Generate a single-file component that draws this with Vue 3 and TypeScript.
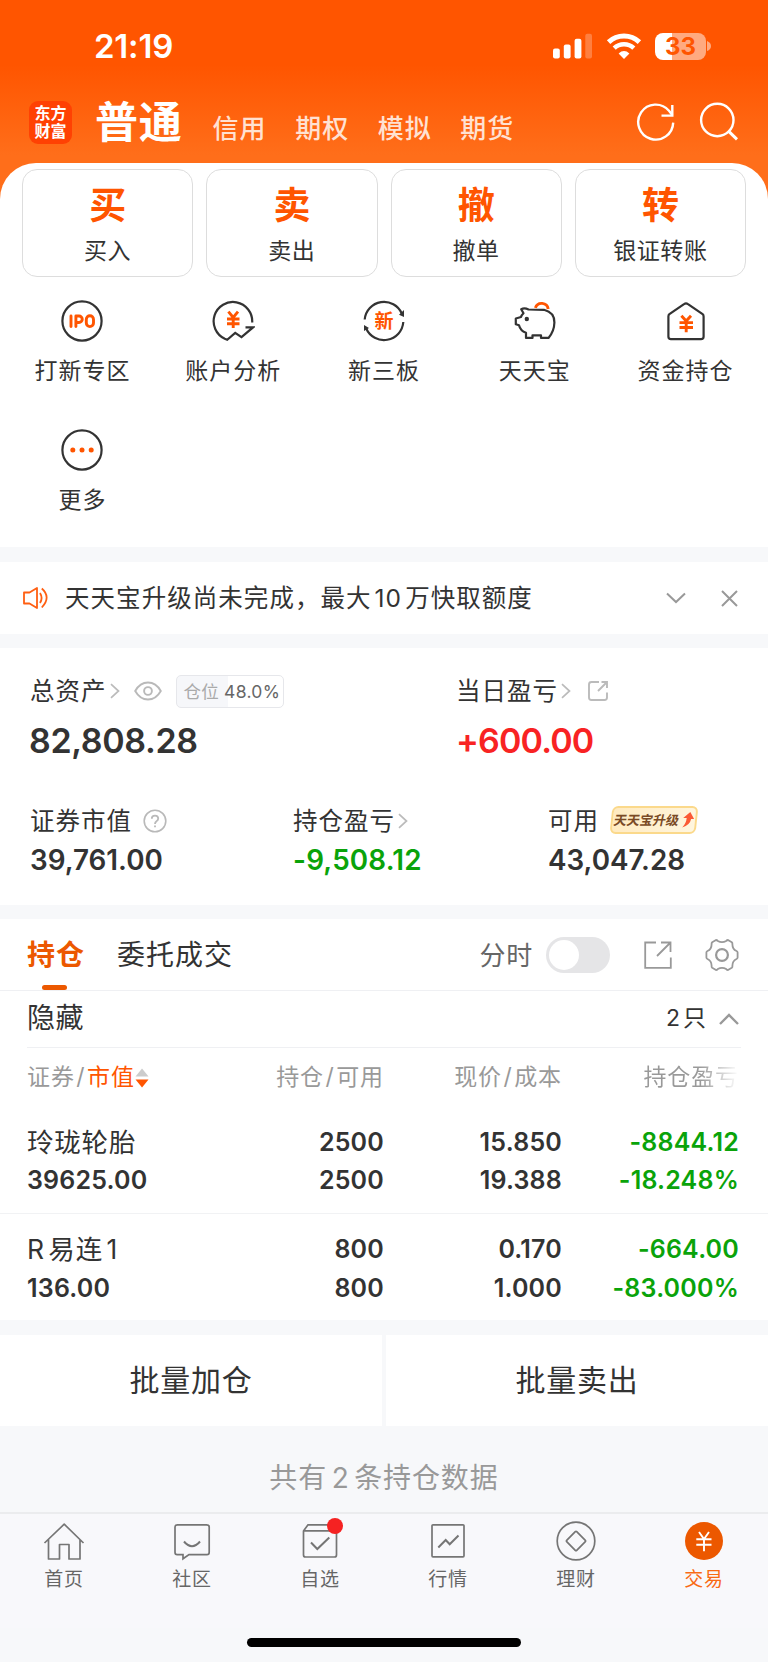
<script setup lang="ts">
interface Card { glyph: string; label: string }
interface Shortcut { icon: string; label: string }
interface Holding {
  name: string[]
  value: string
  held: string
  usable: string
  price: string
  cost: string
  profit: string
  rate: string
}

const markets: string[] = ['信用', '期权', '模拟', '期货']

const cards: Card[] = [
  { glyph: '买', label: '买入' },
  { glyph: '卖', label: '卖出' },
  { glyph: '撤', label: '撤单' },
  { glyph: '转', label: '银证转账' },
]

const shortcuts: Shortcut[] = [
  { icon: 'ipo', label: '打新专区' },
  { icon: 'account', label: '账户分析' },
  { icon: 'neeq', label: '新三板' },
  { icon: 'piggy', label: '天天宝' },
  { icon: 'house', label: '资金持仓' },
  { icon: 'more', label: '更多' },
]

// Names are split where Latin and Chinese runs meet, so the runs can be spaced apart.
const holdings: Holding[] = [
  { name: ['玲珑轮胎'], value: '39625.00', held: '2500', usable: '2500', price: '15.850', cost: '19.388', profit: '-8844.12', rate: '-18.248%' },
  { name: ['R', '易连', '1'], value: '136.00', held: '800', usable: '800', price: '0.170', cost: '1.000', profit: '-664.00', rate: '-83.000%' },
]

const tabs: Shortcut[] = [
  { icon: 'home', label: '首页' },
  { icon: 'community', label: '社区' },
  { icon: 'watch', label: '自选' },
  { icon: 'quotes', label: '行情' },
  { icon: 'wealth', label: '理财' },
  { icon: 'trade', label: '交易' },
]
</script>

<template>
  <div class="screen">
    <header class="header">
      <div class="status">
        <span class="time">21:19</span>
        <div class="status-icons">
          <svg class="signal" width="39" height="26" viewBox="0 0 39 26">
            <rect x="0" y="15.5" width="6.8" height="10" rx="2" fill="#fff" />
            <rect x="10.8" y="11.5" width="6.8" height="14" rx="2" fill="#fff" />
            <rect x="21.6" y="5.8" width="6.8" height="19.7" rx="2" fill="#fff" />
            <rect x="32.3" y="0.8" width="6.7" height="24.7" rx="2" fill="#fff" fill-opacity=".25" />
          </svg>
          <svg class="wifi" width="36" height="27" viewBox="0 0 36 27">
            <path d="M2.6 9.1 A22.5 22.5 0 0 1 33.4 9.1" fill="none" stroke="#fff" stroke-width="5" />
            <path d="M8.2 15.2 A14.2 14.2 0 0 1 27.8 15.2" fill="none" stroke="#fff" stroke-width="4.5" />
            <path d="M18 26 L12.6 20.4 Q18 15.8 23.4 20.4 Z" fill="#fff" />
          </svg>
          <div class="battery"><span>33</span></div>
          <svg class="battery-tip" width="4" height="10" viewBox="0 0 4 10"><path d="M0 0 Q4 1.5 4 5 T0 10Z" fill="#fff" fill-opacity=".5" /></svg>
        </div>
      </div>
      <nav class="nav">
        <div class="logo"><span>东方</span><span>财富</span></div>
        <span class="nav-active">普通</span>
        <span v-for="m in markets" :key="m" class="nav-item">{{ m }}</span>
        <div class="nav-tools">
          <svg width="40" height="40" viewBox="0 0 40 40" fill="none" stroke="#fff" stroke-width="2.4">
            <path d="M37.2 20.6 A17.5 17.5 0 1 1 33 8.7 L36.3 13" />
            <path d="M25.5 13.6 H36.3 V3" />
          </svg>
          <svg width="40" height="40" viewBox="0 0 40 40" fill="none" stroke="#fff" stroke-width="2.4">
            <circle cx="18.3" cy="18" r="16.2" />
            <path d="M29.5 29.2 L38 37.4" stroke-width="3" />
          </svg>
        </div>
      </nav>
    </header>

    <section class="sheet">
      <div class="cards">
        <div v-for="c in cards" :key="c.glyph" class="card">
          <span class="card-glyph">{{ c.glyph }}</span>
          <span class="card-label">{{ c.label }}</span>
        </div>
      </div>
      <div class="shortcuts">
        <div v-for="s in shortcuts" :key="s.label" class="shortcut">
          <svg width="44" height="44" viewBox="0 0 44 44" fill="none" stroke="#333" stroke-width="2.2">
            <template v-if="s.icon === 'ipo'">
              <circle cx="22" cy="22" r="19.6" />
              <g stroke="#ff5500" stroke-width="2.9" stroke-linejoin="round" stroke-linecap="round">
                <path d="M11 17 V27.5 M15.9 27.5 V17 H19 A3.2 3.2 0 0 1 19 23.5 H16" />
                <rect x="26.3" y="16.8" width="7.2" height="10.8" rx="3.6" />
              </g>
            </template>
            <template v-else-if="s.icon === 'account'">
              <path d="M41.2 23.5 A19.3 19.3 0 1 0 13.8 39.8 L16.2 40.8 L24.2 33.8 L30.5 38.2 L42 28.4 H34.5" />
              <path d="M17.4 12.7 L22.2 18.5 L27 12.7 M16 20 H28.5 M16 24.8 H28.5 M22.2 18.5 V29" stroke="#ff5500" stroke-width="2.9" />
            </template>
            <template v-else-if="s.icon === 'neeq'">
              <path d="M2.7 20.5 A19.4 19.4 0 0 1 39.8 14.5" />
              <path d="M41.3 23 A19.4 19.4 0 0 1 4.2 29.5" />
              <path d="M42 11 V18 L37 15.8Z M2 26 L7 29 L2 32Z" fill="#333" stroke="none" />
              <text x="22" y="29.2" text-anchor="middle" class="svg-new">新</text>
            </template>
            <template v-else-if="s.icon === 'piggy'">
              <path d="M8.2 10.2 Q11.5 8.5 15.5 10.5 L31 10.8 C37.8 12.5 41.5 17 41.4 23.5 C41.2 31 38.5 35.5 35.5 38.9 H28 V36.3 H19.5 V38.9 H13 V33.8 Q7.4 31.8 6 26.3 L2.8 25.3 V19.5 L8 18 Q8.3 16.2 10.5 14.2Z" stroke-linejoin="round" />
              <circle cx="13.8" cy="20" r="2.2" fill="#333" stroke="none" />
              <path d="M22.4 8.9 A6.6 6.6 0 0 1 35.2 10" stroke="#ff5500" stroke-width="2.9" />
            </template>
            <template v-else-if="s.icon === 'house'">
              <path d="M22 4.3 Q22.8 4.3 24 5.2 L38.6 15.2 Q39.6 16 39.6 17.5 V37.5 Q39.6 40.2 37 40.2 H7 Q4.4 40.2 4.4 37.5 V17.5 Q4.4 16 5.4 15.2 L20 5.2 Q21.2 4.3 22 4.3Z" />
              <path d="M17.4 16.7 L22.2 22 L27 16.7 M15.5 23.6 H29 M15.5 28.5 H29 M22.2 22 V33.2" stroke="#ff5500" stroke-width="2.9" />
            </template>
            <template v-else>
              <circle cx="22" cy="22" r="19.6" />
              <g fill="#ff5500" stroke="none"><circle cx="12.8" cy="22" r="2.5" /><circle cx="22" cy="22" r="2.5" /><circle cx="31.2" cy="22" r="2.5" /></g>
            </template>
          </svg>
          <span>{{ s.label }}</span>
        </div>
      </div>
    </section>

    <section class="notice">
      <svg width="26" height="24" viewBox="0 0 26 24" fill="none" stroke="#ff5f12" stroke-width="1.8">
        <path d="M1 6.5 H6.5 L14 2 V22 L6.5 17.5 H1Z" stroke-linejoin="round" />
        <path d="M17 7 Q20.2 12 17 17 M18.8 2.5 Q28.5 11 18.8 21.5" />
      </svg>
      <span class="notice-text">天天宝升级尚未完成，最大<i>10</i>万快取额度</span>
      <svg class="notice-down" width="20" height="12" viewBox="0 0 20 12" fill="none" stroke="#999" stroke-width="2"><path d="M1 1.5 L10 10 L19 1.5" /></svg>
      <svg width="17" height="17" viewBox="0 0 17 17" fill="none" stroke="#999" stroke-width="2"><path d="M1 1 L16 16 M16 1 L1 16" /></svg>
    </section>

    <section class="assets">
      <div class="asset-row main">
        <div class="asset">
          <div class="asset-label">
            <span>总资产</span>
            <svg class="arrow" width="10" height="16" viewBox="0 0 10 16"><path d="M1 1.2 L8.5 8 L1 14.8" /></svg>
            <svg class="eye" width="28" height="20" viewBox="0 0 28 20" fill="none" stroke="#b9b9b9" stroke-width="1.9">
              <path d="M1.2 10 Q6 1.5 14 1.5 T26.8 10 Q22 18.5 14 18.5 T1.2 10Z" /><circle cx="14" cy="10" r="3.9" />
            </svg>
            <span class="position"><b>仓位</b>48.0%</span>
          </div>
          <span class="asset-num">82,808.28</span>
        </div>
        <div class="asset">
          <div class="asset-label">
            <span>当日盈亏</span>
            <svg class="arrow" width="10" height="16" viewBox="0 0 10 16"><path d="M1 1.2 L8.5 8 L1 14.8" /></svg>
            <svg class="share" width="22" height="22" viewBox="0 0 22 22" fill="none" stroke="#bbb" stroke-width="1.9">
              <path d="M12 2 H4.5 Q2 2 2 4.5 V17.5 Q2 20 4.5 20 H17.5 Q20 20 20 17.5 V12.5 M14.5 2 H20 V8 M20 2 L11 11" />
            </svg>
          </div>
          <span class="asset-num red">+600.00</span>
        </div>
      </div>
      <div class="asset-row sub">
        <div class="asset">
          <div class="asset-label">
            <span>证券市值</span>
            <svg class="help" width="24" height="24" viewBox="0 0 24 24" fill="none" stroke="#b9b9b9" stroke-width="1.6">
              <circle cx="12" cy="12" r="10.8" /><path d="M8.8 9.8 Q8.8 6.6 12 6.6 T15.2 9.6 Q15.2 11.2 13.5 12.2 Q12 13.2 12 15 M12 16.5 V18.3" stroke-width="1.8" />
            </svg>
          </div>
          <span class="asset-num">39,761.00</span>
        </div>
        <div class="asset">
          <div class="asset-label">
            <span>持仓盈亏</span>
            <svg class="arrow" width="10" height="16" viewBox="0 0 10 16"><path d="M1 1.2 L8.5 8 L1 14.8" /></svg>
          </div>
          <span class="asset-num green">-9,508.12</span>
        </div>
        <div class="asset">
          <div class="asset-label">
            <span>可用</span>
            <div class="upgrade">
              <span>天天宝升级</span>
              <svg width="12" height="16" viewBox="0 0 12 16"><path d="M7.5 0 L12 7 H9 Q8.5 13 1 15.5 Q4.5 11.5 4.5 6 L1 6Z" fill="#fb5a35" /></svg>
            </div>
          </div>
          <span class="asset-num">43,047.28</span>
        </div>
      </div>
    </section>

    <section class="positions">
      <div class="tabs">
        <span class="tab active">持仓</span>
        <span class="tab">委托成交</span>
        <span class="intraday">分时</span>
        <span class="toggle"><i></i></span>
        <svg class="export" width="28" height="28" viewBox="0 0 28 28" fill="none" stroke="#999" stroke-width="1.8">
          <path d="M12 1.5 H1.2 V26.8 H26.8 V16.5 M17 1.5 H26.5 V11 M26.5 1.5 L13 15" />
        </svg>
        <svg class="gear" width="34" height="34" viewBox="0 0 34 34" fill="none" stroke="#999" stroke-width="1.8">
          <path d="M11 2 Q12 2 12.8 2.9 Q17 5.4 21.2 2.9 Q22 2 23 2 L26.8 4.2 Q27.6 4.9 27.4 6.2 Q27.4 11.2 31.5 13 Q32.6 13.6 32.6 14.6 V19.4 Q32.6 20.4 31.5 21 Q27.4 22.8 27.4 27.8 Q27.6 29.1 26.8 29.8 L23 32 Q22 32 21.2 31.1 Q17 28.6 12.8 31.1 Q12 32 11 32 L7.2 29.8 Q6.4 29.1 6.6 27.8 Q6.6 22.8 2.5 21 Q1.4 20.4 1.4 19.4 V14.6 Q1.4 13.6 2.5 13 Q6.6 11.2 6.6 6.2 Q6.4 4.9 7.2 4.2Z" stroke-linejoin="round" />
          <circle cx="17" cy="17" r="5.9" stroke-width="2.2" />
        </svg>
      </div>
      <div class="fold">
        <span class="fold-name">隐藏</span>
        <span class="fold-count"><i>2</i>只</span>
        <svg width="20" height="12" viewBox="0 0 20 12" fill="none" stroke="#999" stroke-width="2.4"><path d="M1 11 L10 2 L19 11" /></svg>
      </div>
      <div class="grid head">
        <span class="sort">证券<i>/</i><em>市值</em>
          <svg width="14" height="20" viewBox="0 0 14 20"><path d="M7 0.5 L13.5 8.5 H0.5Z" fill="#ccc" /><path d="M7 19.5 L0.5 11.5 H13.5Z" fill="#ff5500" /></svg>
        </span>
        <span>持仓<i>/</i>可用</span>
        <span>现价<i>/</i>成本</span>
        <span class="fade">持仓盈亏</span>
      </div>
      <div v-for="h in holdings" :key="h.value" class="grid row">
        <span class="name"><i v-for="part in h.name" :key="part">{{ part }}</i></span>
        <span>{{ h.held }}</span>
        <span>{{ h.price }}</span>
        <span class="green">{{ h.profit }}</span>
        <span>{{ h.value }}</span>
        <span>{{ h.usable }}</span>
        <span>{{ h.cost }}</span>
        <span class="green">{{ h.rate }}</span>
      </div>
    </section>

    <div class="batch">
      <span>批量加仓</span>
      <span>批量卖出</span>
    </div>
    <p class="total">共有<i>2</i>条持仓数据</p>

    <footer class="tabbar">
      <div v-for="t in tabs" :key="t.label" class="tabbar-item" :class="{ current: t.icon === 'trade' }">
        <svg width="44" height="42" viewBox="0 0 44 42" fill="none" stroke="#757575" stroke-width="1.7">
          <g v-if="t.icon === 'home'">
            <path d="M2.5 23 L22.2 4.2 L41.5 23 M6.5 19.5 V39 H17.5 V24.5 H27 V39 H38 V19.5" stroke-linejoin="round" />
          </g>
          <g v-else-if="t.icon === 'community'">
            <path d="M7.5 4.8 H36.5 Q39.2 4.8 39.2 7 V32.2 Q39.2 34.6 37 34.6 H19 L13 38.8 V34.6 H7.2 Q5 34.6 5 32.2 V7 Q5 4.8 7.5 4.8Z" />
            <path d="M14 21.5 Q22 31 30 21.5" stroke-width="2" />
          </g>
          <g v-else-if="t.icon === 'watch'">
            <path d="M5.5 11 L10 4.8 H34 L38.5 11 V35 Q38.5 37 36.5 37 H7.5 Q5.5 37 5.5 35Z M5.5 10.8 H38.5" />
            <path d="M13 22.5 L19.3 29 L31.3 17.5" stroke-width="2" />
          </g>
          <g v-else-if="t.icon === 'quotes'">
            <rect x="6" y="4.8" width="32" height="32" rx="1" />
            <path d="M12.3 27.5 L19.7 20 L23.7 24.2 L32.5 15.5" stroke-width="2" />
          </g>
          <g v-else-if="t.icon === 'wealth'">
            <circle cx="22" cy="21" r="18.8" />
            <rect x="14.9" y="13.9" width="14.2" height="14.2" rx="1" transform="rotate(45 22 21)" />
          </g>
          <g v-else>
            <circle cx="22" cy="21" r="19" fill="#ec5800" stroke="none" />
            <path d="M17 12 L22 19 L27 12 M14.3 19.2 H29.5 M14.3 24.8 H29.5 M22 19 V31.3" stroke="#fff" stroke-width="1.9" />
          </g>
        </svg>
        <b v-if="t.icon === 'watch'" class="dot"></b>
        <span>{{ t.label }}</span>
      </div>
    </footer>
    <div class="home-indicator"></div>
  </div>
</template>

<style>
body { margin: 0; }
</style>

<style scoped>
.screen {
  width: 768px;
  height: 1662px;
  box-sizing: border-box;
  display: flex;
  flex-direction: column;
  overflow: hidden;
  background: #f7f8fa;
  color: #333;
  font-family: Inter, "Noto Sans CJK SC", sans-serif;
  white-space: nowrap;
}
svg { display: block; flex: none; }
i, em { font-style: normal; }

.header {
  height: 203px;
  flex: none;
  background: linear-gradient(#ff5500 0, #ff5500 65px, #ff6e1a 155px);
}
.status {
  height: 46px;
  padding: 23px 57px 0 94px;
  display: flex;
  align-items: center;
  justify-content: space-between;
  color: #fff;
}
.time { font-size: 33px; line-height: 46px; font-weight: 600; letter-spacing: -.2px; }
.status-icons { display: flex; align-items: center; }
.wifi { margin-left: 14px; }
.battery {
  width: 51px;
  height: 27px;
  margin: 0 1px 0 13px;
  border-radius: 8px;
  background: linear-gradient(90deg, #fff 33%, #ffaa80 33%);
  color: #ff5500;
  font-size: 24px;
  line-height: 27px;
  font-weight: 700;
  text-align: center;
}
.nav { height: 94px; display: flex; align-items: flex-start; padding: 0 29px; }
.logo {
  width: 43px;
  height: 43px;
  margin-top: 32px;
  border-radius: 9px;
  background: #ff4103;
  color: #fff;
  display: flex;
  flex-direction: column;
  align-items: center;
  justify-content: center;
  font-size: 16px;
  line-height: 17.5px;
  font-weight: 700;
}
.nav-active { margin: 23px 30px 0 23px; font-size: 43px; line-height: 60px; font-weight: 700; color: #fff; letter-spacing: .8px; }
.nav-item { margin: 40px 28.5px 0 0; font-size: 26px; line-height: 40px; font-weight: 500; letter-spacing: 1px; color: rgba(255, 255, 255, .82); }
.nav-tools { display: flex; gap: 23px; margin: 33px 0 0 auto; }

.sheet {
  height: 384px;
  flex: none;
  box-sizing: border-box;
  margin-top: -40px;
  padding-top: 6px;
  border-radius: 36px 36px 0 0;
  background: #fff;
}
.cards { display: grid; grid-template-columns: repeat(4, 1fr); gap: 13px; padding: 0 22px; }
.card {
  height: 108px;
  box-sizing: border-box;
  border: 1px solid #ddd;
  border-radius: 15px;
  display: flex;
  flex-direction: column;
  align-items: center;
}
.card-glyph { margin-top: 14px; font-size: 37px; line-height: 44px; font-weight: 700; color: #ff5500; }
.card-label { margin-top: 7px; font-size: 23px; line-height: 32px; letter-spacing: .6px; }
.shortcuts { display: grid; grid-template-columns: repeat(5, 1fr); grid-auto-rows: 129px; padding: 22px 7px 0; }
.shortcut { display: flex; flex-direction: column; align-items: center; gap: 12px; }
.shortcut span { font-size: 23px; line-height: 32px; letter-spacing: 1px; }
.svg-new { font: 700 19px "Noto Sans CJK SC", sans-serif; fill: #ff5500; stroke: none; }

.notice {
  height: 72px;
  flex: none;
  margin-top: 15px;
  padding: 0 30px 0 23px;
  display: flex;
  align-items: center;
  background: #fff;
}
.notice-text { margin-left: 16px; font-size: 24.5px; line-height: 40px; letter-spacing: 1.05px; }
.notice-text i { margin: 0 3px; }
.notice-down { margin: 0 35px 0 auto; }

.assets { height: 257px; flex: none; margin-top: 14px; box-sizing: border-box; padding: 25px 30px 0; background: #fff; }
.asset-row { display: grid; }
.main { grid-template-columns: 426px 1fr; height: 130px; }
.sub { grid-template-columns: 263px 255px 1fr; }
.asset-label { display: flex; align-items: center; height: 36px; font-size: 24.5px; line-height: 36px; letter-spacing: 1px; }
.arrow { margin-left: 3px; fill: none; stroke: #bbb; stroke-width: 1.7; }
.eye { margin-left: 14px; }
.share { margin-left: 16px; }
.help { margin-left: 11px; }
.position {
  height: 33px;
  width: 108px;
  box-sizing: border-box;
  margin-left: 14px;
  padding-left: 7px;
  border: 1px solid #e6e7eb;
  border-radius: 5px;
  background: linear-gradient(90deg, #f6f7fa 48%, #fff 48%);
  font-size: 17.5px;
  line-height: 31px;
  letter-spacing: .3px;
  color: #666;
}
.position b { font-weight: 400; color: #aaa; margin-right: 5px; font-size: 17.5px; }
.asset-num { display: block; font-weight: 600; }
.main .asset-num { margin: 10px 0 0 -1px; font-size: 34px; line-height: 44px; letter-spacing: -.35px; }
.main .red { margin-left: 0; letter-spacing: -.85px; }
.sub .asset-num { margin-top: 2px; font-size: 27.8px; line-height: 38px; }
.sub .green { letter-spacing: .2px; }
.red { color: #f82323; }
.green { color: #0aa30a; }
.upgrade {
  display: flex;
  align-items: center;
  justify-content: center;
  gap: 2px;
  width: 82px;
  height: 24px;
  margin: -2px 0 0 12px;
  border: 2px solid #fbd98b;
  border-radius: 6px;
  background: linear-gradient(100deg, #ffeac0, #fff6df);
  transform: skewX(-6deg);
}
.upgrade span { font-size: 13px; line-height: 24px; font-weight: 700; letter-spacing: 0; color: #7a4a25; transform: skewX(-6deg); }

.positions { flex: none; height: 401px; margin-top: 14px; background: #fff; }
.tabs { height: 72px; box-sizing: border-box; border-bottom: 1.5px solid #eff0f3; padding: 0 29px 0 27px; display: flex; align-items: center; }
.tab { font-size: 28px; line-height: 72px; letter-spacing: 1px; margin-right: 33px; }
.active { position: relative; color: #ec5800; font-weight: 700; margin-right: 32px; }
.active::after { content: ""; position: absolute; left: 15px; bottom: 1px; width: 25px; height: 5px; border-radius: 2.5px; background: #ec5800; }
.intraday { margin: 0 0 2px auto; font-size: 26px; letter-spacing: .8px; color: #666; }
.toggle { width: 58px; height: 30px; margin: 0 34px 0 13px; padding: 3px; border-radius: 18px; background: #e5e5e7; }
.toggle i { display: block; width: 30px; height: 30px; border-radius: 50%; background: #fff; }
.gear { margin-left: 33px; }
.fold { height: 57px; box-sizing: border-box; margin: 0 27px; padding: 0 2px 0 0; border-bottom: 1.5px solid #eff0f3; display: flex; align-items: center; line-height: 54px; }
.fold-name { margin-top: -2px; font-size: 28px; letter-spacing: .4px; }
.fold-count { margin: -2px 13px 0 auto; font-size: 23px; }
.fold-count i { margin-right: 3px; }
.grid { display: grid; grid-template-columns: 177px 180px 178px 177px; padding: 0 26px 0 27px; font-size: 25px; }
.grid span { text-align: right; }
.grid span:nth-child(4n + 1) { text-align: left; }
.head { height: 58px; line-height: 59px; font-size: 23px; letter-spacing: .9px; color: #999; }
.head i { margin: 0 1.5px; }
.head em { color: #ff5500; }
.head .sort { display: flex; align-items: center; }
.head .fade { background: linear-gradient(90deg, #999 78%, #fff 100%); background-clip: text; color: transparent; }
.row { height: 107px; box-sizing: border-box; padding-top: 16.5px; grid-auto-rows: 38.5px; line-height: 39px; font-weight: 600; letter-spacing: .2px; }
.row + .row { border-top: 1.5px solid #f1f2f4; padding-top: 16px; }
.row .name { font-size: 26.5px; font-weight: 400; letter-spacing: .8px; }
.name i + i { margin-left: 3.5px; }

.batch { height: 89px; flex: none; display: grid; grid-template-columns: 1fr 1fr; gap: 4px; margin-top: 15px; }
.batch span { background: #fff; text-align: center; font-size: 30px; line-height: 91px; letter-spacing: .8px; }
.total { margin: 0; height: 88px; flex: none; line-height: 109px; text-align: center; font-size: 28px; letter-spacing: .9px; color: #999; }
.total i { margin: 0 4.5px; }

.tabbar { height: 114px; flex: none; display: grid; grid-template-columns: repeat(6, 1fr); border-top: 2px solid #ebecee; background: #f8f8fb; }
.tabbar-item { position: relative; display: flex; flex-direction: column; align-items: center; padding-top: 6px; color: #666; }
.tabbar-item span { margin-top: 4px; font-size: 19px; line-height: 28px; letter-spacing: .8px; }
.current { color: #f96a14; }
.dot { position: absolute; top: 4px; left: 71px; width: 16px; height: 16px; border-radius: 50%; background: #f52222; }
.home-indicator { width: 274px; height: 9px; flex: none; margin: 10px auto 0; border-radius: 5px; background: #000; }
</style>
